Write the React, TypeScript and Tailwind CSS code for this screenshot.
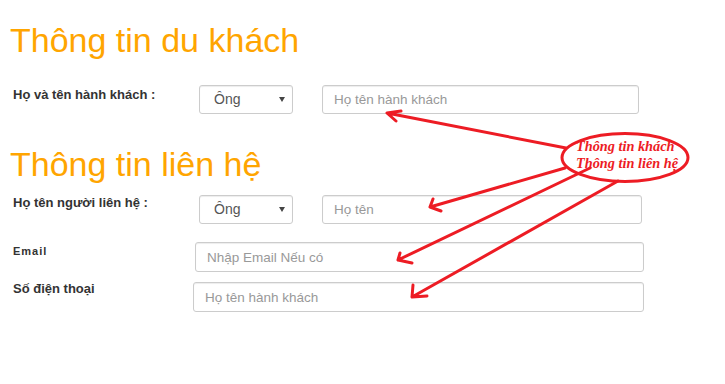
import React from "react";

const font = "font-['Liberation_Sans',Arial,sans-serif]";

function SelectBox() {
  return (
    <div className="flex items-center justify-between w-[94px] h-[29px] pl-[14px] pr-[7px] border border-[#ccc] rounded-[3px] bg-white shadow-[inset_0_1px_1px_rgba(0,0,0,0.075)]">
      <span className="text-[14px] text-[#555]">Ông</span>
      <svg width="6" height="5" viewBox="0 0 6 5">
        <path d="M0 0 L6 0 L3 5 Z" fill="#444" />
      </svg>
    </div>
  );
}

function TextBox({ placeholder, w, h = 29 }: { placeholder: string; w: string; h?: number }) {
  return (
    <input
      placeholder={placeholder}
      style={{ height: h }}
      className={`${w} px-[11px] text-[13.5px] text-[#555] border border-[#ccc] rounded-[3px] bg-white outline-none shadow-[inset_0_1px_1px_rgba(0,0,0,0.075)] placeholder:text-[#999]`}
    />
  );
}

export default function App() {
  return (
    <div className={`relative w-[725px] h-[384px] bg-white overflow-hidden ${font}`}>
      <h2 className="mt-[22px] ml-[10px] text-[34px] leading-[37px] text-[#ffa500]">Thông tin du khách</h2>

      {/* passenger */}
      <div className="flex items-start mt-[26px]">
        <div className="w-[199px] pl-[13px] pt-[2px] text-[13px] leading-[16px] font-bold text-[#333]">Họ và tên hành khách :</div>
        <SelectBox />
        <div className="ml-[29px]">
          <TextBox placeholder="Họ tên hành khách" w="w-[317px]" />
        </div>
      </div>

      <h2 className="mt-[32px] ml-[10px] text-[34px] leading-[37px] text-[#ffa500]">Thông tin liên hệ</h2>

      {/* contact */}
      <div className="flex items-start mt-[12px]">
        <div className="w-[199px] pl-[13px] text-[13px] leading-[16px] font-bold text-[#333]">Họ tên người liên hệ :</div>
        <SelectBox />
        <div className="ml-[29px]">
          <TextBox placeholder="Họ tên" w="w-[320px]" h={29} />
        </div>
      </div>

      <div className="flex items-start mt-[18px]">
        <div className="w-[195px] pl-[13px] pt-[2px] text-[11px] leading-[14px] tracking-[1px] font-bold text-[#333]">Email</div>
        <TextBox placeholder="Nhập Email Nếu có" w="w-[449px]" h={30} />
      </div>

      <div className="flex items-start mt-[10px]">
        <div className="w-[193px] pl-[13px] -mt-[1.5px] text-[13px] leading-[16px] font-bold text-[#333]">Số điện thoại</div>
        <TextBox placeholder="Họ tên hành khách" w="w-[451px]" h={30} />
      </div>

      {/* red annotation */}
      <svg className="absolute left-0 top-0 pointer-events-none" width="725" height="384" viewBox="0 0 725 384">
        <g stroke="#ed1c24" strokeWidth="3" fill="none" strokeLinecap="round" strokeLinejoin="round">
          <ellipse cx="625" cy="157.5" rx="63" ry="24" />
          <path d="M566 148 L387 113 M387 113 L401 111 M387 113 L396 121" />
          <path d="M565 168 L430 207 M430 207 L433 199 M430 207 L441 211" />
          <path d="M590 168 L398 260 M398 260 L400 253 M398 260 L412 263" />
          <path d="M618 181 L412 297 M412 297 L413 285 M412 297 L427 296" />
        </g>
        <g fill="#ed1c24" fontFamily="'Liberation Serif', 'Times New Roman', serif" fontWeight="bold" fontStyle="italic" fontSize="14.3">
          <text x="576" y="151">Thông tin khách</text>
          <text x="576" y="168">Thông tin liên hệ</text>
        </g>
      </svg>
    </div>
  );
}
